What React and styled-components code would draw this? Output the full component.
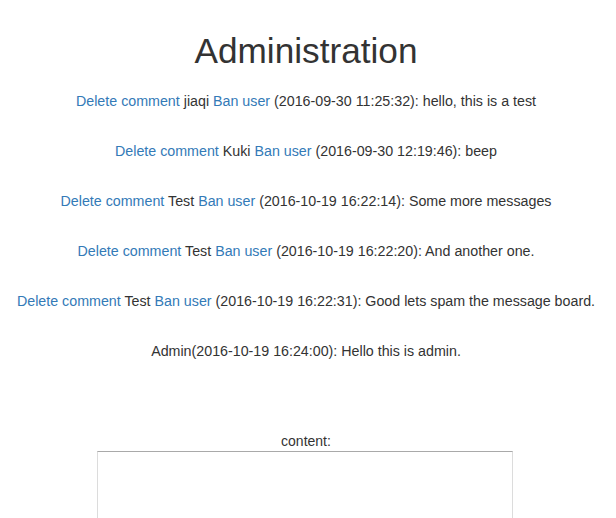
import React from 'react';
import styled, { createGlobalStyle } from 'styled-components';

const GlobalStyle = createGlobalStyle`
  body {
    margin: 0;
    background: #fff;
    font-family: "Liberation Sans", Arial, sans-serif;
    font-size: 14.25px;
    line-height: 20px;
    color: #333;
  }
`;

const Page = styled.div`
  width: 612px;
  padding-top: 31px;
  display: flex;
  flex-direction: column;
  align-items: center;
`;

const Title = styled.h1`
  margin: 0 0 5px;
  font-size: 35.2px;
  font-weight: 500;
  line-height: 40px;
  color: #333;
`;

const CommentList = styled.div`
  display: flex;
  flex-direction: column;
  align-items: center;
  margin-bottom: 55px;
`;

const Comment = styled.div`
  padding: 15px 0;
  white-space: nowrap;
  text-align: center;
`;

const Link = styled.a`
  color: #337ab7;
  text-decoration: none;
  cursor: pointer;
`;

const Form = styled.form`
  display: flex;
  flex-direction: column;
  align-items: center;
`;

const Label = styled.label`
  display: block;
  font-size: 14px;
`;

const TextArea = styled.textarea`
  box-sizing: border-box;
  width: 416px;
  height: 120px;
  margin: 0 0 0 -2px;
  border: 1px solid #dcdcdc;
  border-top-color: #a9a9a9;
  resize: none;
  font-family: inherit;
`;

const comments = [
  { user: 'jiaqi', time: '2016-09-30 11:25:32', text: 'hello, this is a test' },
  { user: 'Kuki', time: '2016-09-30 12:19:46', text: 'beep' },
  { user: 'Test', time: '2016-10-19 16:22:14', text: 'Some more messages' },
  { user: 'Test', time: '2016-10-19 16:22:20', text: 'And another one.' },
  { user: 'Test', time: '2016-10-19 16:22:31', text: 'Good lets spam the message board.' },
];

const App = () => {
  return (
    <>
      <GlobalStyle />
      <Page>
        <Title>Administration</Title>
        <CommentList>
          {comments.map((c, idx) => (
            <Comment key={idx}>
              <Link>Delete comment</Link> {c.user} <Link>Ban user</Link> ({c.time}): {c.text}
            </Comment>
          ))}
          <Comment>Admin(2016-10-19 16:24:00): Hello this is admin.</Comment>
        </CommentList>
        <Form onSubmit={(e) => e.preventDefault()}>
          <Label htmlFor="content">content:</Label>
          <TextArea id="content" />
        </Form>
      </Page>
    </>
  );
};

export default App;
